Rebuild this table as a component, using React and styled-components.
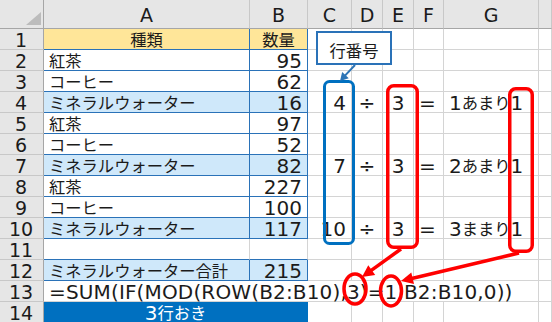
import React from "react";
import styled, { createGlobalStyle, css } from "styled-components";

const Global = createGlobalStyle`
  html, body { margin: 0; padding: 0; background: #ffffff; }
  body { width: 552px; height: 322px; overflow: hidden; }
`;

const GRID = "#d4d4d4";
const HEAD_LINE = "#c8c8c8";
const HEAD_EDGE = "#a6a6a6";
const TABLE_BLUE = "#2a72b8";

const Page = styled.div`
  position: relative;
  width: 552px;
  height: 322px;
  overflow: hidden;
`;

const Sheet = styled.div`
  display: grid;
  grid-template-columns: 44px 206px 58px 44px 31px 31px 30px 95px 1fr;
  grid-template-rows: 29px repeat(14, 21px);
  font-family: "DejaVu Sans", "Noto Sans CJK JP", sans-serif;
  color: #1b1b1b;
`;

const Corner = styled.div`
  position: relative;
  background: #e6e6e6;
  border-right: 1px solid ${HEAD_EDGE};
  border-bottom: 1px solid ${HEAD_EDGE};
  box-sizing: border-box;
`;

const CornerMark = styled.svg`
  position: absolute;
  right: 2px;
  bottom: 3px;
`;

const ColHead = styled.div`
  box-sizing: border-box;
  background: #e6e6e6;
  border-right: 1px solid ${HEAD_LINE};
  border-bottom: 1px solid ${HEAD_EDGE};
  display: flex;
  align-items: center;
  justify-content: center;
  font-size: 19px;
  line-height: 1;
  padding-top: 3px;
`;

const RowHead = styled.div`
  box-sizing: border-box;
  background: #e6e6e6;
  border-right: 1px solid ${HEAD_EDGE};
  border-bottom: 1px solid ${HEAD_LINE};
  display: flex;
  align-items: center;
  justify-content: center;
  font-size: 19px;
  line-height: 1;
  padding: 2px 1px 0 0;
`;

const fills = {
  orange: "#ffe699",
  blue: "#cfe8fa",
  band: "#0070c0",
};

const Cell = styled.div`
  box-sizing: border-box;
  min-width: 0;
  display: flex;
  align-items: center;
  justify-content: ${(p) =>
    p.$align === "right" ? "flex-end" : p.$align === "center" ? "center" : "flex-start"};
  padding: 1px 5px 0 5px;
  white-space: nowrap;
  font-size: 20px;
  line-height: 1;
  letter-spacing: ${(p) => (p.$wide ? "0.15px" : "0")};
  background: ${(p) => (p.$fill ? fills[p.$fill] : "transparent")};
  color: ${(p) => (p.$fill === "band" ? "#ffffff" : "inherit")};
  border-right: 1px solid ${GRID};
  border-bottom: 1px solid ${GRID};
  ${(p) => p.$span && css`grid-column: span ${p.$span};`}
  ${(p) =>
    p.$table &&
    css`
      border-right-color: ${TABLE_BLUE};
      border-bottom-color: ${TABLE_BLUE};
    `}
  ${(p) =>
    p.$blueBottom &&
    css`
      border-bottom-color: ${TABLE_BLUE};
    `}
  ${(p) =>
    p.$fill === "band" &&
    css`
      border-color: ${fills.band};
    `}
`;

const Jp = styled.span`
  font-family: "Noto Sans CJK JP", sans-serif;
  font-size: 16.3px;
  line-height: 1;
`;

const Callout = styled.div`
  position: absolute;
  left: 316px;
  top: 31px;
  width: 76px;
  height: 34px;
  box-sizing: border-box;
  border: 2px solid ${TABLE_BLUE};
  background: #ffffff;
  display: flex;
  align-items: center;
  justify-content: center;
  padding-top: 3px;
  font-family: "Noto Sans CJK JP", sans-serif;
  font-size: 16.3px;
  color: #1b1b1b;
`;

const Overlay = styled.svg`
  position: absolute;
  left: 0;
  top: 0;
  pointer-events: none;
`;

const COLS = ["A", "B", "C", "D", "E", "F", "G", ""];

const rows = [
  { n: 1, a: "種類", b: "数量", head: true },
  { n: 2, a: "紅茶", b: "95" },
  { n: 3, a: "コーヒー", b: "62" },
  { n: 4, a: "ミネラルウォーター", b: "16", hl: true, calc: ["4", "3", "1", "あまり", "1"] },
  { n: 5, a: "紅茶", b: "97" },
  { n: 6, a: "コーヒー", b: "52" },
  { n: 7, a: "ミネラルウォーター", b: "82", hl: true, calc: ["7", "3", "2", "あまり", "1"] },
  { n: 8, a: "紅茶", b: "227" },
  { n: 9, a: "コーヒー", b: "100" },
  { n: 10, a: "ミネラルウォーター", b: "117", hl: true, calc: ["10", "3", "3", "ままり", "1"] },
  { n: 11, empty: true },
  { n: 12, a: "ミネラルウォーター合計", b: "215", hl: true },
  { n: 13, formula: "=SUM(IF(MOD(ROW(B2:B10),3)=1,B2:B10,0))" },
  { n: 14, band: "3行おき" },
];

function Rest({ calc }) {
  if (!calc) {
    return (
      <>
        <Cell />
        <Cell />
        <Cell />
        <Cell />
        <Cell />
        <Cell />
      </>
    );
  }
  const [c, e, g1, gj, g2] = calc;
  return (
    <>
      <Cell $align="right">{c}</Cell>
      <Cell $align="center">÷</Cell>
      <Cell $align="center">{e}</Cell>
      <Cell>=</Cell>
      <Cell>
        {g1}
        <Jp>{gj}</Jp>
        {g2}
      </Cell>
      <Cell />
    </>
  );
}

function Row({ r }) {
  if (r.formula) {
    return (
      <>
        <RowHead>{r.n}</RowHead>
        <Cell $span={7} $wide>
          {r.formula}
        </Cell>
        <Cell />
      </>
    );
  }
  if (r.band) {
    return (
      <>
        <RowHead>{r.n}</RowHead>
        <Cell $span={2} $fill="band" $align="center">
          {r.band.slice(0, 1)}
          <Jp>{r.band.slice(1)}</Jp>
        </Cell>
        <Rest />
      </>
    );
  }
  if (r.empty) {
    return (
      <>
        <RowHead>{r.n}</RowHead>
        <Cell $blueBottom />
        <Cell $blueBottom />
        <Rest />
      </>
    );
  }
  const fill = r.head ? "orange" : r.hl ? "blue" : undefined;
  return (
    <>
      <RowHead>{r.n}</RowHead>
      <Cell $table $fill={fill} $align={r.head ? "center" : "left"}>
        <Jp>{r.a}</Jp>
      </Cell>
      <Cell $table $fill={fill} $align={r.head ? "center" : "right"}>
        {r.head ? <Jp>{r.b}</Jp> : r.b}
      </Cell>
      <Rest calc={r.calc} />
    </>
  );
}

function Arrow({ x0, y0, x1, y1, color, width, len, half }) {
  const dx = x1 - x0;
  const dy = y1 - y0;
  const d = Math.hypot(dx, dy);
  const ux = dx / d;
  const uy = dy / d;
  const nx = -uy;
  const ny = ux;
  const bx = x1 - len * ux;
  const by = y1 - len * uy;
  const pts = `${x1},${y1} ${bx + half * nx},${by + half * ny} ${bx - half * nx},${by - half * ny}`;
  return (
    <g>
      <line x1={x0} y1={y0} x2={bx + ux} y2={by + uy} stroke={color} strokeWidth={width} />
      <polygon points={pts} fill={color} />
    </g>
  );
}

export default function App() {
  return (
    <Page>
      <Global />
      <Sheet>
        <Corner>
          <CornerMark width="15" height="13" viewBox="0 0 15 13">
            <polygon points="15,0 15,13 0,13" fill="#bcbcbc" />
          </CornerMark>
        </Corner>
        {COLS.map((c, i) => (
          <ColHead key={i}>{c}</ColHead>
        ))}
        {rows.map((r) => (
          <Row key={r.n} r={r} />
        ))}
      </Sheet>

      <Overlay width="552" height="322" viewBox="0 0 552 322">
        <rect x="324.5" y="81.5" width="29" height="162" rx="5" fill="none" stroke="#0070c0" strokeWidth="3" />
        <rect x="387.75" y="85.75" width="29.5" height="161.5" rx="6" fill="none" stroke="#ff0000" strokeWidth="3.5" />
        <rect x="509.75" y="88.75" width="22.5" height="162.5" rx="6" fill="none" stroke="#ff0000" strokeWidth="3.5" />
        <Arrow x0={355} y0={65} x1={340} y1={81} color="#2e75b6" width={2} len={8} half={4.5} />
        <Arrow x0={401} y0={249} x1={362} y1={277} color="#ff0000" width={3.5} len={12} half={6} />
        <Arrow x0={519} y0={253} x1={401} y1={281} color="#ff0000" width={3.5} len={12} half={6} />
        <ellipse cx="355" cy="289" rx="11" ry="15" fill="none" stroke="#ff0000" strokeWidth="3.5" />
        <ellipse cx="391" cy="291" rx="10.5" ry="15" fill="none" stroke="#ff0000" strokeWidth="3.5" />
      </Overlay>

      <Callout>行番号</Callout>
    </Page>
  );
}
